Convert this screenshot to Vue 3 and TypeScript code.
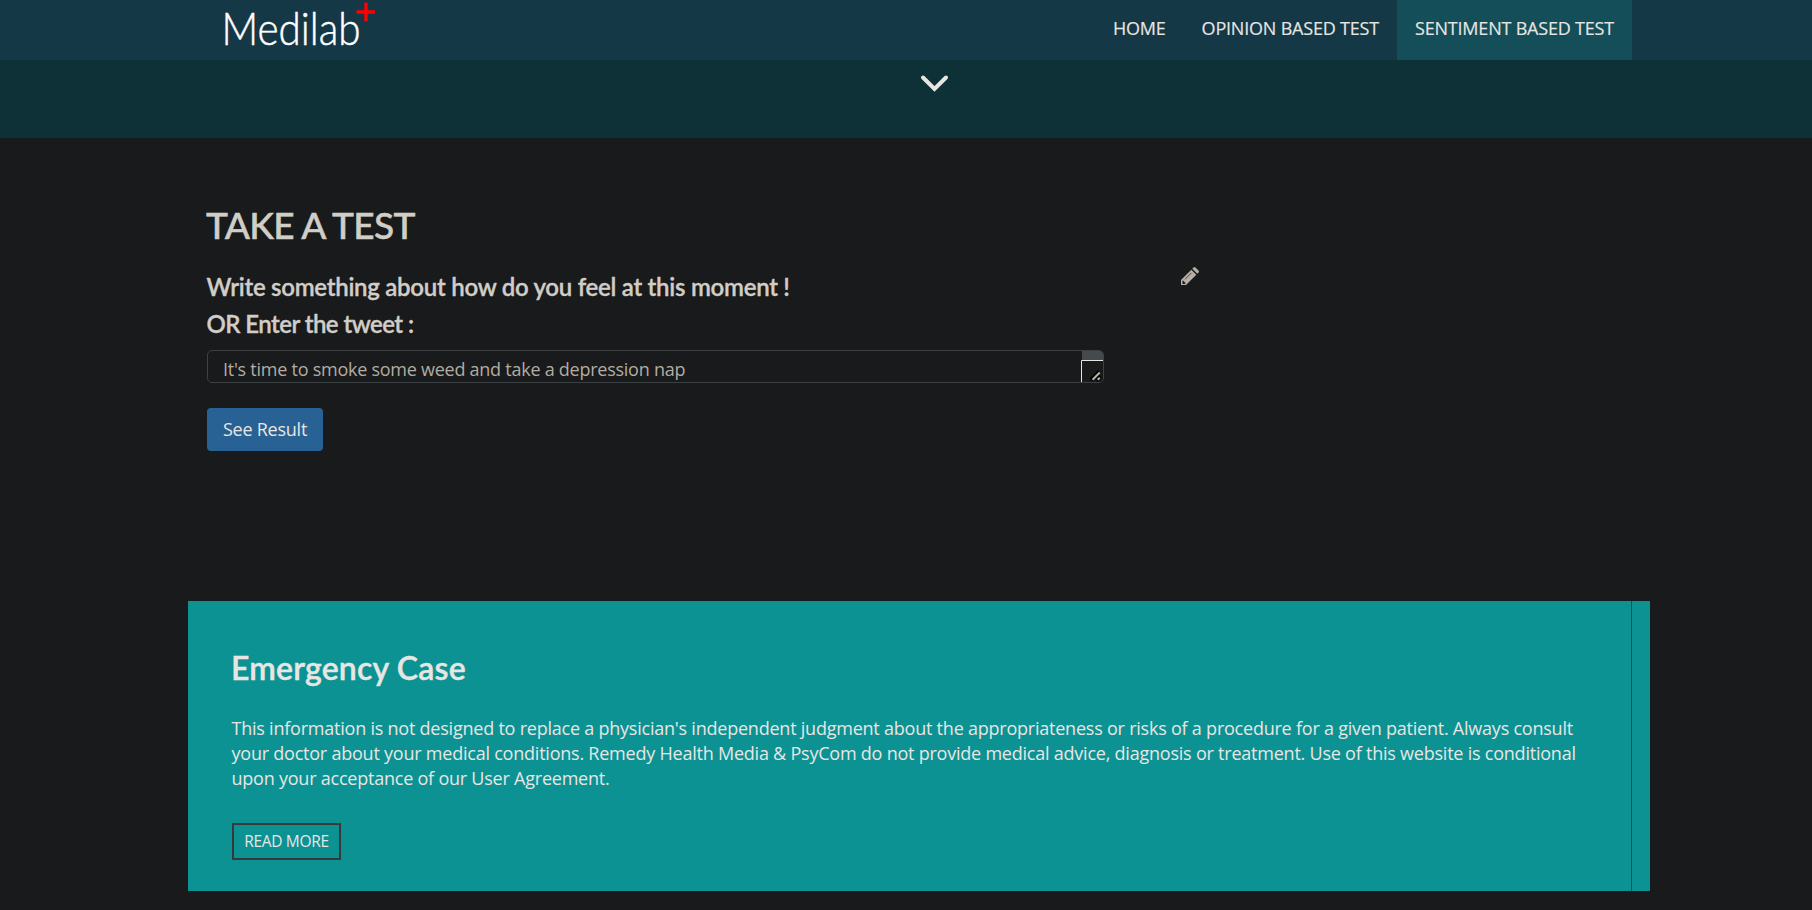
<script setup lang="ts">
import { ref } from 'vue'

interface NavItem {
  label: string
  active: boolean
}

const navItems: NavItem[] = [
  { label: 'HOME', active: false },
  { label: 'OPINION BASED TEST', active: false },
  { label: 'SENTIMENT BASED TEST', active: true },
]

const tweet = ref("It's time to smoke some weed and take a depression nap")
</script>

<template>
  <div class="page">
    <header class="navbar">
      <a class="brand" aria-label="Medilab">
        <svg width="160" height="60" viewBox="0 0 160 60">
          <text x="1.500" y="44.700" class="logo-text" textLength="139" lengthAdjust="spacingAndGlyphs">Medilab</text>
          <path d="M146 2.500v19M136.500 12h18.500" stroke="#f00" stroke-width="3.400" />
        </svg>
      </a>
      <nav class="nav">
        <a v-for="item in navItems" :key="item.label" class="nav-item" :class="{ active: item.active }">{{ item.label }}</a>
      </nav>
    </header>

    <section class="banner">
      <svg class="chevron" width="30" height="20" viewBox="0 0 30 20">
        <path d="M3 3.500 L14.500 15 L26 3.500" fill="none" stroke="#e8e6e3" stroke-width="4" stroke-linecap="round" />
      </svg>
    </section>

    <main class="test">
      <h2 class="title">TAKE A TEST</h2>
      <div class="row">
        <form class="form" @submit.prevent>
          <h4 class="question q1">Write something about how do you feel at this moment !</h4>
          <h4 class="question q2">OR Enter the tweet :</h4>
          <div class="field">
            <span class="value">{{ tweet }}</span>
            <span class="scroll-track">
              <svg class="grip" width="22" height="22" viewBox="0 0 22 22">
                <path d="M0.500 22V0.500H22" fill="none" stroke="#e8e6e3" />
                <path d="M10 20L18.500 11.500M15.500 20.500L19.500 16.500" stroke="#000" stroke-width="4" />
                <path d="M11.500 19.800L18.800 12.500M16.700 19.800L18.800 17.700" stroke="#b5b1aa" stroke-width="2" />
              </svg>
            </span>
          </div>
          <button class="submit" type="submit">See Result</button>
        </form>
        <svg class="pencil" width="18" height="18" viewBox="0 0 18 18">
          <path d="M0 18V13L10.300 2.700L15.300 7.700L5 18Z" fill="#b5afa4" />
          <path d="M11.300 1.700L12.600 0.500Q13.500 -0.300 14.400 0.500L17.500 3.600Q18.300 4.500 17.500 5.400L16.300 6.700Z" fill="#b5afa4" />
          <path d="M1.800 13.300L4.700 16.200L3.700 17H1.500V14Z" fill="#181a1b" />
          <path d="M4 12.300L10.500 5.800" stroke="#181a1b" stroke-width="0.700" />
        </svg>
      </div>
    </main>

    <section class="emergency">
      <div class="emergency-body">
        <h3 class="emergency-title">Emergency Case</h3>
        <p class="emergency-text">This information is not designed to replace a physician's independent judgment about the appropriateness or risks of a procedure for a given patient. Always consult<br>your doctor about your medical conditions. Remedy Health Media &amp; PsyCom do not provide medical advice, diagnosis or treatment. Use of this website is conditional<br>upon your acceptance of our User Agreement.</p>
        <a class="more">READ MORE</a>
      </div>
    </section>
  </div>
</template>

<style>
body {
  margin: 0;
  background: #181a1b;
}
</style>

<style scoped>
.page {
  height: 910px;
  overflow: hidden;
  background: #181a1b;
  color: #d1cdc7;
  font-family: "Open Sans", sans-serif;
  font-size: 18px;
}
h2, h3, h4, p {
  margin: 0;
}
.navbar {
  height: 60px;
  box-sizing: border-box;
  padding: 0 180px 0 220px;
  display: flex;
  justify-content: space-between;
  background: #153847;
}
.brand svg {
  display: block;
}
.logo-text {
  font-family: Lato, sans-serif;
  font-weight: 300;
  font-size: 45px;
  fill: #fff;
  stroke: #fff;
  stroke-width: 0.5px;
}
.nav {
  display: flex;
}
.nav-item {
  box-sizing: border-box;
  padding: 0 18px;
  line-height: 57px;
  color: #e8e6e3;
  letter-spacing: -0.2px;
  -webkit-text-stroke: 0.15px #e8e6e3;
}
.nav-item.active {
  background: #134e59;
}
.banner {
  height: 78px;
  background: #0e3138;
}
.chevron {
  display: block;
  margin-left: 920px;
  padding-top: 14px;
}
.test {
  height: 463px;
  box-sizing: border-box;
  padding: 62px 207px 0;
}
.title {
  font-family: Lato, sans-serif;
  font-weight: 500;
  font-size: 37px;
  line-height: 50px;
  margin-left: -1px;
  letter-spacing: -0.7px;
  -webkit-text-stroke: 0.5px #d1cdc7;
}
.row {
  display: flex;
}
.form {
  width: 897px;
  padding-top: 18px;
}
.question {
  font-family: Lato, sans-serif;
  font-weight: 600;
  font-size: 24px;
  line-height: 37px;
  margin-left: -0.5px;
  white-space: nowrap;
  -webkit-text-stroke: 0.35px #d1cdc7;
}
.q1 {
  letter-spacing: -0.27px;
}
.q2 {
  letter-spacing: -0.55px;
}
.field {
  height: 33px;
  margin-top: 8px;
  box-sizing: border-box;
  border: 1px solid #3c4143;
  border-radius: 5px;
  overflow: hidden;
  display: flex;
  justify-content: space-between;
}
.value {
  padding-left: 15px;
  color: #b2aca2;
  line-height: 37px;
  letter-spacing: -0.255px;
  white-space: nowrap;
}
.scroll-track {
  width: 22px;
  height: 31px;
  background: linear-gradient(90deg, #181a1b 1px, transparent 1px), linear-gradient(#454a4c 9px, #181a1b 9px);
}
.grip {
  display: block;
  margin-top: 9px;
}
.submit {
  display: block;
  margin-top: 25px;
  width: 116px;
  height: 43px;
  padding: 0;
  border: 0;
  border-radius: 4px;
  background: #286193;
  color: #e8e6e3;
  font: 18px/43px "Open Sans", sans-serif;
  letter-spacing: -0.24px;
}
.pencil {
  margin: 17px 0 0 77px;
}
.emergency {
  width: 1462px;
  height: 290px;
  margin-left: 188px;
  background: #0c9293;
  display: flex;
}
.emergency-body {
  width: 1444px;
  height: 290px;
  box-sizing: border-box;
  padding: 44px 0 0 44px;
  border-right: 1px solid #1b4e50;
  color: #e8e6e3;
}
.emergency-title {
  font-family: Lato, sans-serif;
  font-weight: 600;
  font-size: 32px;
  line-height: 46px;
  margin-left: -1px;
  letter-spacing: 0.2px;
  -webkit-text-stroke: 0.4px #e8e6e3;
}
.emergency-text {
  margin: 25px 0 0 -0.5px;
  line-height: 25px;
  letter-spacing: -0.226px;
  white-space: nowrap;
}
.more {
  display: block;
  width: 109px;
  height: 37px;
  box-sizing: border-box;
  margin-top: 32px;
  border: 2px solid #343a3c;
  text-align: center;
  font-size: 15.5px;
  line-height: 33px;
  letter-spacing: -0.35px;
}
</style>
